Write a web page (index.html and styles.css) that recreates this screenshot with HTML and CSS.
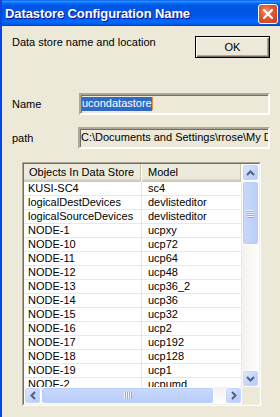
FILE: index.html
```html
<!DOCTYPE html>
<html lang="en">
<head>
  <meta charset="UTF-8">
  <title>Datastore Configuration Name</title>
  <link rel="stylesheet" href="styles.css">
</head>
<body>
  <div class="window">
    <div class="titlebar">
      <span class="title">Datastore Configuration Name</span>
      <button class="close" aria-label="Close">
        <svg width="10" height="10" viewBox="0 0 10 10">
          <path d="M1 1 L9 9 M9 1 L1 9" stroke="#fff" stroke-width="2.2" stroke-linecap="square"/>
        </svg>
      </button>
    </div>

    <div class="content">
      <div class="top-row">
        <span class="caption">Data store name and location</span>
        <button class="ok">OK</button>
      </div>

      <!-- name / path -->
      <div class="field name-field">
        <label>Name</label>
        <div class="input"><span class="sel">ucondatastore</span><span class="caret"></span></div>
      </div>
      <div class="field path-field">
        <label>path</label>
        <div class="input">C:\Documents and Settings\rrose\My Documents\ucon</div>
      </div>

      <!-- list view -->
      <div class="list">
        <div class="list-inner">
          <div class="table">
            <div class="head">
              <div class="hcell">Objects In Data Store</div>
              <div class="hcell">Model</div>
            </div>
            <div class="rows" id="rows"></div>
          </div>
          <div class="vscroll">
            <div class="sb-btn"><svg width="9" height="6" viewBox="0 0 9 6"><path d="M1 5 L4.5 1.5 L8 5" fill="none" stroke="#4d6185" stroke-width="2"/></svg></div>
            <div class="vthumb"><span></span><span></span><span></span><span></span></div>
            <div class="vtrack"></div>
            <div class="sb-btn"><svg width="9" height="6" viewBox="0 0 9 6"><path d="M1 1 L4.5 4.5 L8 1" fill="none" stroke="#4d6185" stroke-width="2"/></svg></div>
          </div>
          <div class="hscroll">
            <div class="sb-btn"><svg width="6" height="9" viewBox="0 0 6 9"><path d="M5 1 L1.5 4.5 L5 8" fill="none" stroke="#4d6185" stroke-width="2"/></svg></div>
            <div class="hthumb"><span></span><span></span><span></span><span></span></div>
            <div class="htrack"></div>
            <div class="sb-btn"><svg width="6" height="9" viewBox="0 0 6 9"><path d="M1 1 L4.5 4.5 L1 8" fill="none" stroke="#4d6185" stroke-width="2"/></svg></div>
          </div>
          <div class="corner"></div>
        </div>
      </div>
    </div>
  </div>

  <script>
    const items = [
      ['KUSI-SC4', 'sc4'],
      ['logicalDestDevices', 'devlisteditor'],
      ['logicalSourceDevices', 'devlisteditor'],
      ['NODE-1', 'ucpxy'],
      ['NODE-10', 'ucp72'],
      ['NODE-11', 'ucp64'],
      ['NODE-12', 'ucp48'],
      ['NODE-13', 'ucp36_2'],
      ['NODE-14', 'ucp36'],
      ['NODE-15', 'ucp32'],
      ['NODE-16', 'ucp2'],
      ['NODE-17', 'ucp192'],
      ['NODE-18', 'ucp128'],
      ['NODE-19', 'ucp1'],
      ['NODE-2', 'ucpumd'],
      ['NODE-20', 'ucp16']
    ];

    const rows = document.getElementById('rows');
    items.forEach(([name, model]) => {
      const row = document.createElement('div');
      row.className = 'row';
      row.innerHTML = `<div class="cell">${name}</div><div class="cell">${model}</div>`;
      rows.appendChild(row);
    });
  </script>
</body>
</html>
```

FILE: styles.css
```css
* { box-sizing: border-box; }

body {
  margin: 0;
  width: 280px;
  height: 417px;
  overflow: hidden;
  font-family: "Liberation Sans", Arial, sans-serif;
  font-size: 11px;
  color: #000;
  background: #ece9d8;
}

.window {
  height: 417px;
  border-left: 2px solid #0b45dc;
  background: #ece9d8;
}

/* title bar */
.titlebar {
  height: 26px;
  display: flex;
  align-items: center;
  justify-content: space-between;
  padding: 0 2px 0 3px;
  background: linear-gradient(180deg, #0058ee 0%, #3593ff 5%, #127dff 9%, #0262ee 15%, #0057e5 22%, #0054e3 30%, #0055eb 56%, #005bf5 70%, #026afe 82%, #0062ef 90%, #0052d6 96%, #0040ab 100%);
}
.title {
  color: #fff;
  font-weight: bold;
  font-size: 13px;
  text-shadow: 1px 1px #0f1089;
  letter-spacing: -0.1px;
}
.close {
  width: 20px;
  height: 20px;
  margin-top: 1px;
  padding: 0;
  border: 1px solid #fff;
  border-radius: 3px;
  display: flex;
  align-items: center;
  justify-content: center;
  background: radial-gradient(circle at 40% 35%, #f08f6b 0%, #e0562c 45%, #c9401a 100%);
}

.content { padding: 10px 10px 0 10px; }

.top-row {
  display: flex;
  justify-content: space-between;
  align-items: flex-start;
}
.caption { line-height: 13px; }
.ok {
  width: 75px;
  height: 22px;
  padding: 0;
  font-family: inherit;
  font-size: 11px;
  background: #ece9d8;
  border: 1px solid #000;
  box-shadow: inset 1px 1px #fff, inset -1px -1px #716f64, inset -2px -2px #aca899;
}

.field {
  display: flex;
  align-items: center;
  justify-content: space-between;
}
.name-field { margin-top: 35px; }
.path-field { margin-top: 12px; }
.field label { line-height: 13px; }

.input {
  height: 22px;
  padding: 2px 1px;
  overflow: hidden;
  white-space: nowrap;
  line-height: 13px;
  display: flex;
  border-width: 2px;
  border-style: solid;
  border-color: #aca899 #fff #fff #aca899;
  box-shadow: inset 1px 1px #716f64;
  background: #ece9d8;
}
.name-field .input { width: 191px; }
.path-field .input { width: 192px; }
.sel { background: #316ac5; color: #fff; }
.caret { width: 1px; height: 13px; background: #e0952c; }

/* list view */
.list {
  margin: 13px 0 0 10px;
  width: 239px;
  height: 244px;
  border: 1px solid;
  border-color: #aca899 #fff #fff #aca899;
}
.list-inner {
  height: 100%;
  border: 1px solid;
  border-color: #716f64 #f1efe2 #f1efe2 #716f64;
  display: grid;
  grid-template-columns: 218px 17px;
  grid-template-rows: 223px 17px;
  background: #fff;
}

.table { overflow: hidden; }
.head, .row {
  display: grid;
  grid-template-columns: 118px 100px;
}
.head {
  height: 18px;
  background: linear-gradient(180deg, #ebeadb 0%, #ebeadb 80%, #e2decd 84%, #d6d2c2 90%, #cbc7b8 100%);
}
.hcell {
  padding: 2px 0 0 5px;
  line-height: 13px;
  border-right: 1px solid #fff;
  box-shadow: inset -1px 0 #c7c5b2;
}
.hcell + .hcell { padding-left: 6px; }
.cell {
  height: 14px;
  padding: 0 0 0 4px;
  line-height: 13px;
  white-space: nowrap;
  overflow: hidden;
  border-right: 1px solid #ece9d8;
  border-bottom: 1px solid #ece9d8;
}
.cell + .cell { padding-left: 6px; }

/* scrollbars */
.vscroll {
  grid-row: 1;
  grid-column: 2;
  display: flex;
  flex-direction: column;
  background: linear-gradient(90deg, #f3f1ec, #fefefb);
}
.hscroll {
  grid-row: 2;
  grid-column: 1;
  display: flex;
  background: linear-gradient(180deg, #f3f1ec, #fefefb);
}
.corner { background: #ece9d8; }
.vtrack, .htrack { flex: 1; }

.sb-btn {
  width: 17px;
  height: 17px;
  flex: none;
  border: 1px solid #fff;
  border-radius: 3px;
  display: flex;
  align-items: center;
  justify-content: center;
  background: linear-gradient(135deg, #e2ebfe 0%, #c6d6fb 50%, #b4c9f6 100%);
  box-shadow: inset 0 0 0 1px #c3d3fd;
}

.vthumb, .hthumb {
  flex: none;
  border: 1px solid #fff;
  border-radius: 3px;
  display: flex;
  align-items: center;
  justify-content: center;
  gap: 1px;
  box-shadow: inset 0 0 0 1px #b8ccf8;
}
.vthumb {
  height: 64px;
  flex-direction: column;
  background: linear-gradient(90deg, #c9d9fd, #b9cdf8);
}
.hthumb {
  width: 173px;
  background: linear-gradient(180deg, #c9d9fd, #b9cdf8);
}
.vthumb span { width: 7px; height: 1px; background: #eef4fe; box-shadow: 0 1px #8caeed; }
.hthumb span { width: 1px; height: 7px; background: #eef4fe; box-shadow: 1px 0 #8caeed; }
```
